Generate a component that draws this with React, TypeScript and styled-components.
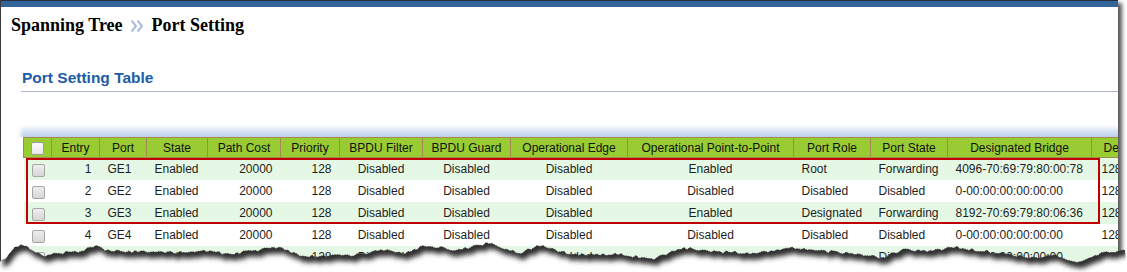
import * as React from 'react'
import styled, { createGlobalStyle } from 'styled-components'

// ___________________________________________________________________

type Align = 'left' | 'center' | 'right'

type Column = {
  key: string
  title: string
  width: number
  align: Align
}

type PortRow = Record<string, string>

const columns: Column[] = [
  { key: 'entry', title: 'Entry', width: 48, align: 'right' },
  { key: 'port', title: 'Port', width: 47, align: 'left' },
  { key: 'state', title: 'State', width: 61, align: 'left' },
  { key: 'cost', title: 'Path Cost', width: 73, align: 'right' },
  { key: 'prio', title: 'Priority', width: 59, align: 'right' },
  { key: 'filter', title: 'BPDU Filter', width: 83, align: 'center' },
  { key: 'guard', title: 'BPDU Guard', width: 88, align: 'center' },
  { key: 'edge', title: 'Operational Edge', width: 117, align: 'center' },
  { key: 'p2p', title: 'Operational Point-to-Point', width: 166, align: 'center' },
  { key: 'role', title: 'Port Role', width: 77, align: 'left' },
  { key: 'pstate', title: 'Port State', width: 77, align: 'left' },
  { key: 'bridge', title: 'Designated Bridge', width: 144, align: 'left' },
  { key: 'dport', title: 'Designated Port', width: 110, align: 'left' },
]

const mk = (
  n: number,
  p2p: string,
  role: string,
  pstate: string,
  bridge: string
): PortRow => ({
  entry: String(n),
  port: `GE${n}`,
  state: 'Enabled',
  cost: '20000',
  prio: '128',
  filter: 'Disabled',
  guard: 'Disabled',
  edge: 'Disabled',
  p2p,
  role,
  pstate,
  bridge,
  dport: `128-${n}`,
})

const rows: PortRow[] = [
  mk(1, 'Enabled', 'Root', 'Forwarding', '4096-70:69:79:80:00:78'),
  mk(2, 'Disabled', 'Disabled', 'Disabled', '0-00:00:00:00:00:00'),
  mk(3, 'Enabled', 'Designated', 'Forwarding', '8192-70:69:79:80:06:36'),
  mk(4, 'Disabled', 'Disabled', 'Disabled', '0-00:00:00:00:00:00'),
  mk(5, 'Disabled', 'Disabled', 'Disabled', '0-00:00:00:00:00:00'),
]

// torn paper edge along the bottom -----------------------------------

const tearKeys: [number, number][] = [
  [0, 262], [6, 258], [14, 248], [22, 243], [30, 250], [44, 256], [62, 253],
  [82, 251], [96, 246], [108, 251], [135, 252], [165, 253], [200, 251],
  [232, 254], [258, 250], [280, 247], [300, 256], [350, 256], [380, 250],
  [405, 253], [428, 245], [455, 251], [488, 243], [520, 253], [540, 246],
  [575, 255], [620, 254], [653, 259], [683, 248], [720, 252], [760, 253],
  [790, 248], [830, 252], [865, 255], [882, 258], [902, 250], [930, 252],
  [952, 247], [990, 252], [1010, 255], [1032, 258], [1052, 255], [1080, 262],
  [1100, 254], [1127, 251],
]

const jitter = (x: number) => {
  const v = Math.sin(x * 12.9898 + 78.233) * 43758.5453
  return (v - Math.floor(v) - 0.5) * 3
}

const tearPoints = (() => {
  const pts: string[] = []
  for (let x = 0; x <= 1127; x += 3) {
    let i = 0
    while (i < tearKeys.length - 2 && tearKeys[i + 1][0] < x) i++
    const [x0, y0] = tearKeys[i]
    const [x1, y1] = tearKeys[i + 1]
    const t = Math.min(1, Math.max(0, (x - x0) / (x1 - x0)))
    const y = y0 + (y1 - y0) * t + jitter(x)
    pts.push(`${x},${y.toFixed(1)}`)
  }
  return pts
})()

const tearLine = `M${tearPoints.join(' L')}`
const below = `M0,272 L${tearPoints.join(' L')} L1127,272 Z`
const above = `M0,0 L${tearPoints.join(' L')} L1127,0 Z`

// ___________________________________________________________________

const App: React.FC = () => {
  return (
    <Stage>
      <GlobalStyle />
      <Page>
        <TopBar />
        <Breadcrumb>
          Spanning Tree
          <Chevrons width="14" height="14" viewBox="0 0 14 14">
            <path d="M1.5 1.5 L6 7 L1.5 12.5" />
            <path d="M7.5 1.5 L12 7 L7.5 12.5" />
          </Chevrons>
          Port Setting
        </Breadcrumb>
        <SectionTitle>Port Setting Table</SectionTitle>
        <Glow />
        <TableArea>
          <Table>
            <colgroup>
              <col style={{ width: 28 }} />
              {columns.map((c) => (
                <col key={c.key} style={{ width: c.width }} />
              ))}
            </colgroup>
            <thead>
              <tr>
                <Th>
                  <Check $head />
                </Th>
                {columns.map((c) => (
                  <Th key={c.key}>{c.title}</Th>
                ))}
              </tr>
            </thead>
            <tbody>
              {rows.map((r, i) => (
                <Tr key={r.entry} $alt={i % 2 === 0}>
                  <Td $align="center">
                    <Check />
                  </Td>
                  {columns.map((c) => (
                    <Td key={c.key} $align={c.align} $wide={c.key === 'dport'}>
                      {r[c.key]}
                    </Td>
                  ))}
                </Tr>
              ))}
            </tbody>
          </Table>
          <Highlight />
        </TableArea>
      </Page>
      <Tear width="1127" height="272" viewBox="0 0 1127 272">
        <defs>
          <clipPath id="below-tear">
            <path d={below} />
          </clipPath>
          <filter id="tear-blur" x="-5%" y="-50%" width="110%" height="200%">
            <feGaussianBlur stdDeviation="2.4" />
          </filter>
        </defs>
        <path d={below} fill="#fff" />
        <g clipPath="url(#below-tear)">
          <path
            d={above}
            transform="translate(3 6)"
            fill="#2e2e2e"
            filter="url(#tear-blur)"
          />
        </g>
        <path
          d={tearLine}
          fill="none"
          stroke="#333"
          strokeWidth="0.8"
          strokeDasharray="1.5 1"
        />
      </Tear>
    </Stage>
  )
}

export default App

// ___________________________________________________________________

const GlobalStyle = createGlobalStyle`
  html, body {
    margin: 0;
    padding: 0;
    background: #fff;
  }
  body {
    width: 1127px;
    height: 272px;
    overflow: hidden;
  }
`

const Stage = styled.div`
  position: relative;
  width: 1127px;
  height: 272px;
  overflow: hidden;
  background: #fff;
`

const Page = styled.div`
  width: 1117px;
  height: 272px;
  border-left: 1px solid #3a3a3a;
  background: #fff;
  overflow: hidden;
  box-shadow: 4px 3px 4px rgba(0, 0, 0, 0.65);
`

const TopBar = styled.div`
  height: 6px;
  background: #33649a;
  border-top: 1px solid #25303c;
`

const Breadcrumb = styled.div`
  display: flex;
  align-items: center;
  margin: 7px 0 0 10px;
  height: 22px;
  font-family: 'Liberation Serif', 'Times New Roman', serif;
  font-weight: bold;
  font-size: 18px;
  color: #000;
`

const Chevrons = styled.svg`
  margin: 1px 8px 0 7px;
  path {
    fill: none;
    stroke: #a9bddb;
    stroke-width: 2;
    stroke-linejoin: round;
  }
`

const SectionTitle = styled.div`
  margin: 32px 0 0 20px;
  padding: 0 0 3px 1px;
  line-height: 20px;
  border-bottom: 1px solid #aeb7c8;
  font-family: 'Liberation Sans', Arial, sans-serif;
  font-weight: bold;
  font-size: 15.5px;
  color: #1b5ca9;
`

const Glow = styled.div`
  margin: 33px 0 0 17px;
  height: 12px;
  background: linear-gradient(
    to bottom,
    rgba(196, 212, 236, 0) 0%,
    rgba(190, 208, 234, 0.7) 60%,
    #bccfe8 100%
  );
  -webkit-mask-image: linear-gradient(to right, transparent 0, #000 6px);
  mask-image: linear-gradient(to right, transparent 0, #000 6px);
`

const TableArea = styled.div`
  position: relative;
  margin-left: 22px;
`

const Table = styled.table`
  border-collapse: collapse;
  table-layout: fixed;
  width: 1138px;
  font-family: 'Liberation Sans', Arial, sans-serif;
  font-size: 12px;
`

const Th = styled.th`
  height: 19px;
  padding: 0;
  background: #99cc33;
  border: 1px solid #a48a4e;
  font-weight: normal;
  color: #111;
  text-align: center;
  white-space: nowrap;
  overflow: hidden;
  vertical-align: middle;
`

const Tr = styled.tr<{ $alt?: boolean }>`
  background: ${(p) => (p.$alt ? '#e5f8e5' : '#fff')};
`

const Td = styled.td<{ $align: Align; $wide?: boolean }>`
  height: 22px;
  padding: ${(p) => (p.$wide ? '0 0 0 10px' : '0 8px')};
  text-align: ${(p) => p.$align};
  color: #1e1e1e;
  white-space: nowrap;
  overflow: hidden;
  vertical-align: middle;
`

const Check = styled.span<{ $head?: boolean }>`
  display: inline-block;
  box-sizing: border-box;
  width: 13px;
  height: 13px;
  margin-top: 2px;
  vertical-align: middle;
  border: 1px solid ${(p) => (p.$head ? '#9c9c9c' : '#a6a6a6')};
  border-radius: 2px;
  background: ${(p) =>
    p.$head
      ? 'linear-gradient(#fafafa, #e8e8e8)'
      : 'linear-gradient(#eeeeee, #d6d6d6)'};
`

const Highlight = styled.div`
  position: absolute;
  left: 3px;
  top: 21px;
  width: 1074px;
  height: 66px;
  box-sizing: border-box;
  border: 2px solid #c00000;
  pointer-events: none;
`

const Tear = styled.svg`
  position: absolute;
  left: 0;
  top: 0;
  pointer-events: none;
`
